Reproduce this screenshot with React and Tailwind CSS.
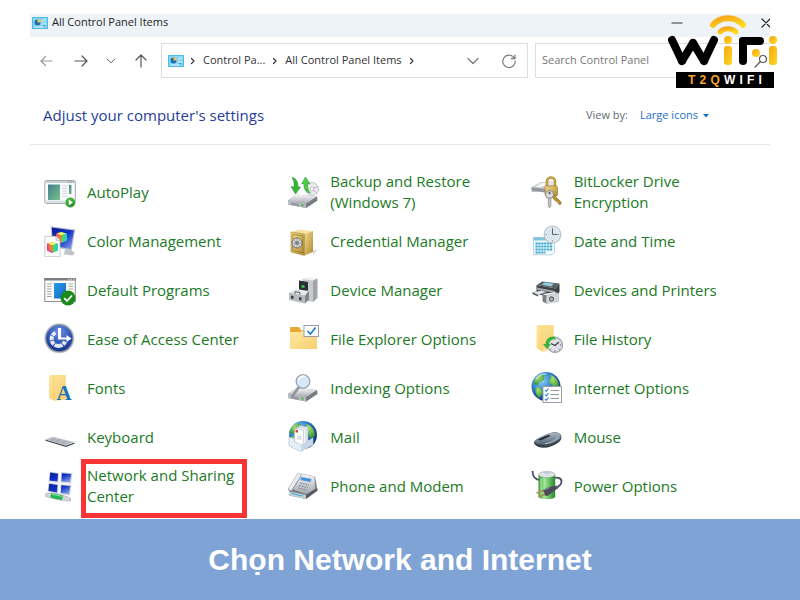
import React, { useState } from "react";

// shared gradients, referenced by every icon below
function IconDefs() {
  return (
    <svg width="0" height="0" className="absolute" aria-hidden="true">
      <defs>
        <linearGradient id="gSteel" x1="0" y1="0" x2="0" y2="1">
          <stop offset="0" stopColor="#f7f8f9" />
          <stop offset="1" stopColor="#a3a8ae" />
        </linearGradient>
        <linearGradient id="gDark" x1="0" y1="0" x2="0" y2="1">
          <stop offset="0" stopColor="#a9b8c8" />
          <stop offset="1" stopColor="#55616f" />
        </linearGradient>
        <linearGradient id="gPhoto" x1="0" y1="0" x2="1" y2="1">
          <stop offset="0" stopColor="#3f7f92" />
          <stop offset="1" stopColor="#7cc08a" />
        </linearGradient>
        <linearGradient id="gBlue" x1="0" y1="0" x2="1" y2="1">
          <stop offset="0" stopColor="#2b9be8" />
          <stop offset="1" stopColor="#1168c4" />
        </linearGradient>
        <linearGradient id="gScreen" x1="0" y1="0" x2="1" y2="1">
          <stop offset="0" stopColor="#0b1c9c" />
          <stop offset="0.5" stopColor="#1433c4" />
          <stop offset="1" stopColor="#8fb0ee" />
        </linearGradient>
        <linearGradient id="gFolder" x1="0" y1="0" x2="1" y2="1">
          <stop offset="0" stopColor="#ffe9a6" />
          <stop offset="1" stopColor="#f7cf6c" />
        </linearGradient>
        <linearGradient id="gGold" x1="0" y1="0" x2="1" y2="1">
          <stop offset="0" stopColor="#f3da8c" />
          <stop offset="1" stopColor="#b08a30" />
        </linearGradient>
        <linearGradient id="gGreen" x1="0" y1="0" x2="1" y2="0">
          <stop offset="0" stopColor="#2c9a2e" />
          <stop offset="0.35" stopColor="#a6e89a" />
          <stop offset="1" stopColor="#1f8a26" />
        </linearGradient>
        <linearGradient id="gRainbow" x1="0" y1="0" x2="1" y2="0">
          <stop offset="0" stopColor="#f0308c" />
          <stop offset="0.3" stopColor="#ffd02a" />
          <stop offset="0.6" stopColor="#46e04a" />
          <stop offset="1" stopColor="#2ac6f4" />
        </linearGradient>
        <linearGradient id="gLogo" x1="0" y1="0" x2="1" y2="1">
          <stop offset="0" stopColor="#f6a51c" />
          <stop offset="1" stopColor="#ffdb1a" />
        </linearGradient>
        <radialGradient id="gGlobe" cx="0.35" cy="0.3" r="0.75">
          <stop offset="0" stopColor="#8fd4fa" />
          <stop offset="0.5" stopColor="#2b7ccc" />
          <stop offset="1" stopColor="#0d2c70" />
        </radialGradient>
        <radialGradient id="gLand" cx="0.4" cy="0.3" r="0.8">
          <stop offset="0" stopColor="#a8e06c" />
          <stop offset="1" stopColor="#2b8a32" />
        </radialGradient>
        <radialGradient id="gEase" cx="0.5" cy="0.25" r="0.8">
          <stop offset="0" stopColor="#6f93e0" />
          <stop offset="0.6" stopColor="#2b50b4" />
          <stop offset="1" stopColor="#14307e" />
        </radialGradient>
        <radialGradient id="gBadge" cx="0.4" cy="0.3" r="0.8">
          <stop offset="0" stopColor="#58c44a" />
          <stop offset="1" stopColor="#12801a" />
        </radialGradient>
      </defs>
    </svg>
  );
}

function Svg({ children, className = "size-8 shrink-0" }) {
  return (
    <svg viewBox="0 0 32 32" className={className} fill="none" aria-hidden="true">
      {children}
    </svg>
  );
}

function Cube({ x, y }) {
  return (
    <g transform={`translate(${x} ${y})`}>
      <path d="M0 2.500 5 1l6 1.500v7L5.500 12 0 9.500z" fill="url(#gRainbow)" />
      <path d="M0 2.500 5.500 4v8L0 9.500z" fill="#f33a55" opacity="0.55" />
      <path d="M1 2.600 5.500 1.200 10 2.600 5.500 4z" fill="#fff36b" />
      <path d="M1 8.500 5.500 10.500v1.500L1 10z" fill="#e936c8" />
    </g>
  );
}

function Land() {
  return (
    <g fill="url(#gLand)">
      <path d="M4 7c2-3 5-4.500 8-5l2 1.500-1.500 2 1 1.500-3 2.500-2.500.5-.5 2.500-3 .5-2-2z" />
      <path d="M4.500 15l4 .5 3.500 3-1 3.500-2.500 4c-3-2-4.500-6-4-11z" />
      <path d="M18.500 2.500c4 1 7.500 4 9 8l.5 4-2.500 3-3-1-1-3.500-3-1.500-.5-3.500 2-2z" />
    </g>
  );
}

function Drive() {
  return (
    <g>
      <path d="M1 22 9 16l21 2 .3 4L19 29.500 1 26z" fill="#8b9096" />
      <path d="M1 22 9 16l21 2-11 7.500z" fill="url(#gSteel)" />
      <path d="M1 22v4l18 3.500v-4z" fill="#b9bdc2" />
      <path d="M19 25.500v4L30.300 22 30 18z" fill="#777c82" />
      <path d="M4 24.500l8 1.500M4 25.800l8 1.500" stroke="#6c7178" strokeWidth="0.6" />
      <path d="M14.500 25.500l2 .4v2l-2-.4z" fill="#33bb33" />
    </g>
  );
}

function AutoPlayIcon() {
  return (
    <Svg>
      <rect x="0.8" y="4.500" width="30.500" height="23" rx="1.500" fill="#fafbfc" stroke="#a4abb5" />
      <path d="M1.300 5h29.500v2H1.300z" fill="#c9d0d9" />
      <path d="M24 6h1.500M26.500 6H28M29 6h1" stroke="#707a86" strokeWidth="0.8" />
      <path d="M1.300 24.500h29.500V27H1.300z" fill="#dde2e8" />
      <rect x="4" y="8.500" width="12" height="15.500" fill="url(#gPhoto)" />
      <path d="M18 10h5M18 12.500h5M18 15h5M18 17.500h5M18 20h5" stroke="#d3d8de" />
      <rect x="25" y="9" width="2.500" height="9" fill="url(#gPhoto)" />
      <circle cx="26.300" cy="26.500" r="5" fill="url(#gBadge)" stroke="#b7d9b3" strokeWidth="0.6" />
      <path d="M24.800 23.800v5.400l4.200-2.700z" fill="#fff" />
    </Svg>
  );
}

function ColorIcon() {
  return (
    <Svg>
      <path d="M21 24l6 1 4 3-2 2.500-9-1z" fill="#c2c5c9" />
      <path d="M6.700 1.300 31.300 4.500 27.700 25.500 8 22z" fill="#bcc4cf" />
      <path d="M7.800 2.600 30 5.500 26.800 24 9 20.800z" fill="url(#gScreen)" />
      <Cube x={12} y={6} />
      <path d="M.8 11.300H12l4 4v16.400H.8z" fill="#fdfdfd" stroke="#b5b8bc" strokeWidth="0.7" />
      <path d="M12 11.300v4h4" fill="#e3e5e8" stroke="#b5b8bc" strokeWidth="0.7" />
      <Cube x={3} y={16} />
    </Svg>
  );
}

function DefaultIcon() {
  return (
    <Svg>
      <rect x="0.8" y="4.500" width="30.500" height="23" fill="#fcfcfc" stroke="#8d9093" />
      <path d="M.3 4h31.400v2.500H.3z" fill="#7b7e82" />
      <path d="M24 5.200h1.500M26.500 5.200H28M29 5.200h1.500" stroke="#fff" strokeWidth="0.7" />
      <rect x="10" y="9" width="12" height="15.500" fill="url(#gBlue)" />
      <path
        d="M3 10h4.500M3 12.500h4.500M3 15h4.500M3 17.500h4.500M3 20h4.500M3 22.500h4.500M24.500 10H29M24.500 12.500H29M24.500 15H29"
        stroke="#9a9da1"
        strokeWidth="0.9"
      />
      <circle cx="24" cy="24" r="7.500" fill="#1b8a1b" />
      <path d="M20.200 24.200l2.800 2.800 5-5.500" stroke="#fff" strokeWidth="1.800" />
    </Svg>
  );
}

function EaseIcon() {
  return (
    <Svg>
      <circle cx="15.300" cy="15.300" r="15" fill="#c4c8cf" />
      <circle cx="15.300" cy="15.300" r="14" fill="#8c91a0" />
      <circle cx="15.300" cy="15.300" r="13" fill="url(#gEase)" />
      {/* three quarter ring, open towards the top right */}
      <path d="M14.500 23a7 7 0 0 0 6.500-4.500M14.500 23a7 7 0 0 1 -3-13.300" stroke="#e6ebf6" strokeWidth="4" strokeDasharray="4 0.800" />
      <path d="M14 5h3v9.500h5.500V12l5 3.500-5 3.500v-2.500H14z" fill="#fff" />
    </Svg>
  );
}

function FontsIcon() {
  return (
    <Svg>
      <path d="M7 3h14.500v24.500H9z" fill="#f3cd6b" />
      <path d="M5 3.500 11 5v24l-6-3z" fill="url(#gFolder)" />
      <path d="M11 5 7 3h14.500v24.500L11 29z" fill="url(#gFolder)" opacity="0.8" />
      <text x="12.500" y="28" fontFamily="Liberation Serif, serif" fontWeight="700" fontSize="21" fill="#1a73b0">
        A
      </text>
    </Svg>
  );
}

function KeyboardIcon() {
  return (
    <Svg>
      <path d="M1.500 18.500 22 24.500l8.500-3v1.200L22 26 1.500 19.800z" fill="#42464b" />
      <path d="M1.500 18.500 8.500 15.800l22 5.200L22 24.800z" fill="#c5c9ce" />
      <path
        d="M4.500 18.400l17.500 5.100M6.500 17.600l17.500 5M8.500 16.900l18.500 4.700M7 19.300l4.500-1.900M12 20.800l4.500-2M17 22.200l4.500-2"
        stroke="#9398a0"
        strokeWidth="0.5"
      />
    </Svg>
  );
}

function NetworkIcon() {
  return (
    <Svg>
      <path d="M5.500 1.500 15 3l-.7 10L4.500 11.500zM17 2l11.500 1-1.500 10.500-10.500-.7z" fill="#ccd3de" />
      <path d="M4.500 12.500 14.500 14 13.800 24 3.500 21.800zM16.500 14.200 27.500 15 26 25.500l-10-1.300z" fill="#ccd3de" />
      <path d="M6.300 2.600 14 3.800l-.5 7.800-8-1.200zM17.900 3.200l9.300.8-1.200 8-8.600-.7z" fill="url(#gScreen)" />
      <path d="M5.300 13.700 13.500 15 13 22.500l-8.500-1.700zM17.400 15.300l8.800.7L25 24l-8.200-1z" fill="url(#gScreen)" />
      <path d="M1.500 23.500c8-1.500 17 1.500 25 4.500v3c-9 0-17-2-25-4.500z" fill="#d3d7dc" stroke="#9ba1a8" strokeWidth="0.5" />
      <path d="M7 23.500c4 0 8 1 12 2.300l-1 4.200c-4-.3-8-1.500-11.500-2.500z" fill="#20b64b" />
      <path d="M8 24.600c3 0 6 .8 10 2" stroke="#86eba0" />
    </Svg>
  );
}

function BackupIcon() {
  return (
    <Svg>
      <circle cx="25" cy="13" r="6.500" fill="#e9ecee" stroke="#aeb3b8" strokeWidth="0.7" />
      <path d="M25 13l6-2.500M25 13l5 4" stroke="#cfa8e0" />
      <circle cx="25" cy="13" r="1.800" fill="#fff" stroke="#9ba0a6" strokeWidth="0.6" />
      <g transform="translate(0 2.500)">
        <Drive />
      </g>
      <path d="M5 1.500c4 .5 6 4 6 9.500h2.500l-5 7L4 10.500l3 .5c.5-4-.5-7-2-9.500z" fill="#39b436" stroke="#1f8a26" strokeWidth="0.5" />
      <path d="M18.500 1l4.500 7-2.500-.3c0 4 .5 7 3 9.500-5-1-7-4.500-6.500-9.700l-2.500.5z" fill="#4fca48" stroke="#1f8a26" strokeWidth="0.5" />
    </Svg>
  );
}

function SafeIcon() {
  return (
    <Svg>
      <path d="M26 26l5-2-5 6z" fill="#d6d6d6" />
      <path d="M4 7 12 4.500l14 1.500L17.500 9z" fill="#f6e4a4" />
      <path d="M17.500 9 26 6v21l-8.500 3.500z" fill="url(#gGold)" />
      <path d="M4 7l13.500 2v21.500L4 27z" fill="url(#gGold)" stroke="#a98836" strokeWidth="0.6" />
      <path d="M5.800 9.300 15.800 11v17L5.800 25.300z" stroke="#8c6c20" strokeWidth="0.6" />
      <circle cx="10" cy="18" r="5" fill="#d7d8d9" stroke="#77736a" />
      <circle cx="10" cy="18" r="2" fill="#888a8c" />
      <path d="M10 13.500v9M5.500 18h9M7 15l6 6M13 15l-6 6" stroke="#77787a" strokeWidth="0.5" />
    </Svg>
  );
}

function DeviceManagerIcon() {
  return (
    <Svg>
      <path d="M15.500 5 20 3l10.500 1.500L26 6.500z" fill="#f1f2f3" />
      <path d="M15.500 5 26 6.500V28l-10.500-2z" fill="#c8cacd" />
      <path d="M26 6.500l4.500-2V24L26 28z" fill="#a0a4a8" />
      <path d="M12 6.500l9 1.500v11L12 17.500z" fill="#2a2d30" />
      <path d="M14.500 11l3 .5v2.500l-3-.5z" fill="#3bd047" />
      <path d="M2 18.500 9 15l13 2-4 4.500z" fill="#e6e8ea" />
      <path d="M2 18.500 18 21.500v8L2 26z" fill="#b9bcc1" />
      <path d="M18 21.500l4-4.500v8.500l-4 4z" fill="#80858b" />
      <path d="M4 21.500l2.500.5v3L4 24.500zM12 23l2.500.5v3L12 26z" fill="#3b3f43" />
      <path d="M8 19.700v-2l5 .8v2" stroke="#55595e" />
    </Svg>
  );
}

function FolderOptionsIcon() {
  return (
    <Svg>
      <path d="M3 5c0-.7.500-1 1-1h8l2 3h15c.7 0 1 .4 1 1v5H3z" fill="#e9a733" />
      <path d="M3 9h10l2-1.500h15V25c0 .6-.4 1-1 1H4c-.6 0-1-.4-1-1z" fill="url(#gFolder)" />
      <rect x="17" y="2.500" width="14.500" height="11" fill="#fff" stroke="#9a9da1" />
      <path d="M20.500 8l3 3 5-6.500" stroke="#1c7bd4" strokeWidth="1.600" />
    </Svg>
  );
}

function IndexingIcon() {
  return (
    <Svg>
      <Drive />
      <path d="M5.500 24 12 15" stroke="#8b929b" strokeWidth="2.500" strokeLinecap="round" />
      <circle cx="16" cy="9.500" r="6.800" fill="#cfe3f7" fillOpacity="0.85" stroke="#9aa6b5" strokeWidth="1.300" />
      <path d="M11.500 8c1-2.500 3.500-4 6-3.500" stroke="#fff" strokeWidth="1.500" strokeLinecap="round" />
    </Svg>
  );
}

function MailIcon() {
  return (
    <Svg>
      <circle cx="16" cy="14" r="14" fill="url(#gGlobe)" />
      <Land />
      <path d="M12 4.500l9 1.500v16l-9-1z" fill="#e8eef6" stroke="#9fb0c4" strokeWidth="0.5" />
      <path d="M10 6l9 1.500v17l-9-2z" fill="#f3f6fa" stroke="#9fb0c4" strokeWidth="0.5" />
      <path d="M7.500 7.500l9 1.500v17l-9-2z" fill="#fff" stroke="#9fb0c4" strokeWidth="0.5" />
      <path d="M8.500 8.800l2.500.5v2.500l-2.500-.5z" fill="#e03a3a" />
      <path d="M10 15.500l4.500.7M10 17.500l4.500.7" stroke="#a4b2c2" strokeWidth="0.7" />
      <path d="M2 16l5.500 1.500v3L14 24l12-7v6.500L14 30.500 2 25z" fill="#e6eef8" stroke="#a8b8cc" strokeWidth="0.6" />
      <path d="M14 24v6.500l12-7V17z" fill="#c9d7e9" />
    </Svg>
  );
}

function PhoneIcon() {
  return (
    <Svg>
      <path d="M2 22 14 3.500l14 3 2.500 14L19 29 2 25.500z" fill="#7c838b" />
      <path d="M5 19 14.500 4 27.500 6.500 28 19l-8 5z" fill="url(#gSteel)" />
      <path d="M14.500 7l10 2-1 3-10-2z" fill="#3f93dc" />
      <path d="M2 21.500 19 25v4L2 25.500z" fill="#c4cdd4" />
      <path d="M4 23.500l12 2.500" stroke="#46b3d4" strokeWidth="1.200" />
      <path d="M19 25l11-7 .5 2.500L19 29z" fill="#555b63" />
      <path d="M13 13l9 2M12 15.500l9 2M11 18l9 2" stroke="#858b93" strokeDasharray="1.800 1" strokeWidth="1.200" />
      <path d="M3.500 19 12 5.500" stroke="#8a9198" strokeWidth="4.800" strokeLinecap="round" />
      <path d="M3.500 18.500 12 5" stroke="#e9ecef" strokeWidth="3.500" strokeLinecap="round" />
    </Svg>
  );
}

function BitLockerIcon() {
  return (
    <Svg>
      <path d="M.7 11.500 10 6.500l14-.5-2 9-21 .5z" fill="url(#gSteel)" stroke="#9da1a6" strokeWidth="0.5" />
      <path d="M.7 11.500l13 1.500 8-1v3l-6 2-15-3z" fill="#93979d" />
      <path d="M4 10.800l8-3.300h4l-6 4z" fill="#fff" opacity="0.8" />
      <path d="M16 11V5.500a4 4 0 0 1 8 0V11" stroke="#a37a1f" strokeWidth="2.400" />
      <path d="M16 11V5.500a4 4 0 0 1 8 0V11" stroke="#e0bd5c" strokeWidth="1" />
      <rect x="14" y="10" width="12.500" height="10" rx="1.500" fill="url(#gGold)" stroke="#94701f" strokeWidth="0.6" />
      <path d="M22 18l8.500 8.500-1 2-2-.3-.5-2.200-2-.5L20 20z" fill="#b8902f" stroke="#7c5c14" strokeWidth="0.5" />
      <circle cx="18.500" cy="18.500" r="4" fill="#dadcde" stroke="#777b80" strokeWidth="0.8" />
      <circle cx="18.500" cy="17" r="1.200" fill="#62666b" />
      <path d="M17.300 22h2.600v8l-1.300 1.800-1.300-1.500z" fill="#c3c6c9" stroke="#74787c" strokeWidth="0.6" />
    </Svg>
  );
}

function DateIcon() {
  return (
    <Svg>
      <path d="M2.500 12.500h21v15L20 30l-17.500-.5z" fill="#f2fafc" stroke="#9dc3d0" strokeWidth="0.7" />
      <path d="M2.500 12.500h21v3h-21z" fill="#7fc6dd" />
      <path d="M4.500 18.500h17M4.500 21.500h17M4.500 24.500h17M4.500 27.500h10" stroke="#35a6cd" strokeWidth="2" strokeDasharray="2.200 0.700" />
      <circle cx="21.500" cy="9.500" r="8.300" fill="#eaf0f4" stroke="#b9c3cb" strokeWidth="1.300" />
      <circle cx="21.500" cy="9.500" r="6.300" fill="#dbe5ec" />
      <path d="M21.500 4v5.500h5" stroke="#56626c" />
      <path d="M21.500 2.800v1M21.500 15.300v1M14.800 9.500h1M27.300 9.500h1" stroke="#46525c" strokeWidth="0.8" />
    </Svg>
  );
}

function PrinterIcon() {
  return (
    <Svg>
      <path d="M6 11 11 7.500l17.500 2-4 5z" fill="#5d6165" />
      <path d="M10.500 10.500 14 8.500l9 1.300-3 2.700z" fill="#8fd0e4" />
      <path d="M5.500 11l19 3.500 4-5V18l-4.500 6L5.500 20z" fill="#3c4043" />
      <path d="M6 13.500l18 3.500v2L6 15.800z" fill="#a2a6aa" />
      <path d="M1.500 18.500l9-2 5 1.500-8.500 3z" fill="#e4e6e8" stroke="#85898e" strokeWidth="0.5" />
      <path d="M1.500 18.500l5.500 2.500v1.500l-5.500-2.500z" fill="#4e5256" />
      <path d="M11.500 20l4 1.500v8l-4-2z" fill="#7b7f84" />
      <path d="M15.500 21.500 27.500 19v8.500L15.500 29.500z" fill="#d3d5d8" stroke="#94989c" strokeWidth="0.4" />
      <path d="M11.500 20l12-1.800 4 .8-12 2.500z" fill="#eff0f1" />
      <circle cx="20.500" cy="25" r="3.300" fill="#62676c" stroke="#f2f3f4" strokeWidth="0.9" />
      <circle cx="20.500" cy="25" r="1.500" fill="#a3b9ca" />
    </Svg>
  );
}

function HistoryIcon() {
  return (
    <Svg>
      <path d="M7 2h15.500v23.500H9z" fill="#f5d57e" />
      <path d="M5.500 2.500 12 5v24l-6.500-4z" fill="url(#gFolder)" />
      <path d="M12 5 7 2h15.500v23.500L12 29z" fill="url(#gFolder)" opacity="0.7" />
      <circle cx="24" cy="22" r="7.500" fill="#dfe2e5" stroke="#a6abb0" strokeWidth="1.300" />
      <path d="M20 20.500l4 2 4-3.500" stroke="#373c42" strokeWidth="1.100" />
      <path d="M24 15.500v1.200M24 27.300v1.200M30.300 22H29M19 26.500l.8-.8M28.500 26.500l-.8-.8" stroke="#5c6268" />
      <path d="M24 13.500c-6-.5-9 2.500-9.500 7.500H12l4 5 4-5h-2c.5-3 2.500-4.500 6-5z" fill="#39b23c" />
    </Svg>
  );
}

function InternetIcon() {
  return (
    <Svg>
      <circle cx="15" cy="14.500" r="14.500" fill="url(#gGlobe)" />
      <Land />
      <path d="M5 7c2-3 6-5 10-5" stroke="#d7f0ff" strokeWidth="1.500" strokeLinecap="round" opacity="0.6" />
      <rect x="12" y="14.500" width="18.500" height="16" fill="#fff" stroke="#9a9da2" />
      <path d="M14 18l1.200 1.300 2.300-2.800M14 22.500l1.200 1.300 2.300-2.800M14 27l1.200 1.300 2.300-2.800" stroke="#2a7ed0" strokeWidth="1.100" />
      <path d="M19.500 18.500H28M19.500 22.500H28M19.500 26.500H28" stroke="#93979c" />
    </Svg>
  );
}

function MouseIcon() {
  return (
    <Svg>
      <path d="M3 21.500c0-2 5-4.500 10-7 5-2.300 11-4.500 15-2.300 3.500 2 3 6 0 8.800-5 4-11 6-16 5.800-5-.3-9-2.800-9-5.300z" fill="#39414b" />
      <path d="M3.300 20.500c1-2 5-4 10-6 5-2.300 11-4 14.700-2 3 2 2 5-1.500 7-4.500 3-9.500 4.700-14 4.500-4.500-.2-8.200-1.500-9.200-3.500z" fill="url(#gDark)" />
      <path d="M7 18.500c4-2 7-3.200 10.500-4.500l2 .8c-3 1.700-6 3-10 4.700z" fill="#20262d" />
      <path d="M14 22.800c5-.5 10-3 13.500-6.500" stroke="#c7d3df" strokeWidth="0.8" />
    </Svg>
  );
}

function PowerIcon() {
  return (
    <Svg>
      <path d="M20 9c6-3 11-1 10.500 3-.5 4.500-4 3.500-5 7" stroke="#4c4a6a" strokeWidth="1.800" />
      <path d="M1.500 1c0 6 3 9 8 9" stroke="#4c4a6a" strokeWidth="1.800" />
      <path d="M7.500 4.500h16.700V27c-2 3-14.500 3-16.700 0z" fill="url(#gGreen)" />
      <ellipse cx="15.900" cy="4.500" rx="8.300" ry="3" fill="#dfe3e6" stroke="#9aa0a5" strokeWidth="0.6" />
      <ellipse cx="15.900" cy="2.300" rx="3.300" ry="1.600" fill="#b7cbe0" />
      <path d="M10 9v16" stroke="#d9fbd2" opacity="0.7" />
      <path d="M5.500 23l7-2.500M7.500 27l7-3" stroke="#b98a4c" strokeWidth="1.800" />
      <path d="M12 20l6-3 8-1.500-1 4-7.500 6-3 .5z" fill="#4b4b58" />
      <path d="M13 20l6-2.500" stroke="#9191a0" />
    </Svg>
  );
}

function PanelIcon() {
  return (
    <svg viewBox="0 0 16 12" className="h-3 w-4 shrink-0" fill="none" aria-hidden="true">
      <rect width="16" height="12" rx="0.6" fill="#4db9ea" />
      <rect x="1" y="1" width="14" height="10" fill="#8ad6f6" />
      <circle cx="5.500" cy="5.500" r="3" fill="#1b6fae" />
      <path d="M5.500 5.500V2a3.500 3.500 0 0 1 3.500 3.500z" fill="#f3c55c" />
      <path d="M10.500 4.500l3-2M10.500 7h3.500M3 10h9" stroke="#eefaff" strokeWidth="0.8" />
      <path d="M11 8.800h2.500" stroke="#1b6fae" strokeWidth="0.8" />
    </svg>
  );
}

function Stroke({ d, className }) {
  return (
    <svg viewBox="0 0 16 16" className={className} fill="none" stroke="currentColor" strokeWidth="1.200" strokeLinecap="round" strokeLinejoin="round" aria-hidden="true">
      <path d={d} />
    </svg>
  );
}

const CHEVRON_RIGHT = "M6.500 5.500l2.500 2.500-2.500 2.500";
const CHEVRON_DOWN = "M3 5.500l5 5 5-5";

const ITEMS = [
  { name: "AutoPlay", icon: AutoPlayIcon },
  { name: "Backup and Restore (Windows 7)", icon: BackupIcon },
  { name: "BitLocker Drive Encryption", icon: BitLockerIcon },
  { name: "Color Management", icon: ColorIcon },
  { name: "Credential Manager", icon: SafeIcon },
  { name: "Date and Time", icon: DateIcon },
  { name: "Default Programs", icon: DefaultIcon },
  { name: "Device Manager", icon: DeviceManagerIcon },
  { name: "Devices and Printers", icon: PrinterIcon },
  { name: "Ease of Access Center", icon: EaseIcon },
  { name: "File Explorer Options", icon: FolderOptionsIcon },
  { name: "File History", icon: HistoryIcon },
  { name: "Fonts", icon: FontsIcon },
  { name: "Indexing Options", icon: IndexingIcon },
  { name: "Internet Options", icon: InternetIcon },
  { name: "Keyboard", icon: KeyboardIcon },
  { name: "Mail", icon: MailIcon },
  { name: "Mouse", icon: MouseIcon },
  { name: "Network and Sharing Center", icon: NetworkIcon, highlight: true },
  { name: "Phone and Modem", icon: PhoneIcon },
  { name: "Power Options", icon: PowerIcon },
];

function PanelItem({ item }) {
  const Icon = item.icon;
  return (
    <a href="#" className="flex h-12 items-center gap-[11px] text-[#1b7a25]">
      <Icon />
      <span className="relative max-w-[156px] text-[15px] leading-[21px]">
        {item.name}
        {item.highlight && <span className="absolute -top-[6px] -right-1 -bottom-[11px] -left-[6px] border-5 border-[#f83434]" />}
      </span>
    </a>
  );
}

function Logo() {
  return (
    <div className="absolute top-3 right-[22px] w-[110px]">
      <svg viewBox="0 0 110 60" className="block w-full" fill="none" role="img" aria-label="WiFi">
        <path d="M45 13C52 4 68 4 75 13" stroke="url(#gLogo)" strokeWidth="6" strokeLinecap="round" />
        <path d="M52 20C56 15.500 64 15.500 68 20" stroke="url(#gLogo)" strokeWidth="5" strokeLinecap="round" />
        <g stroke="#000" strokeWidth="8" strokeLinecap="round">
          <line x1="4" y1="28" x2="14" y2="49" />
          <line x1="14" y1="49" x2="25" y2="31" />
          <line x1="25" y1="31" x2="36" y2="49" />
          <line x1="36" y1="49" x2="46" y2="28" />
          <line x1="75" y1="49" x2="75" y2="29" />
          <line x1="75" y1="29" x2="92" y2="29" />
        </g>
        <circle cx="60" cy="28" r="4" fill="url(#gLogo)" />
        <rect x="56" y="34" width="8" height="19" rx="3" fill="url(#gLogo)" />
        <circle cx="88" cy="41" r="4" fill="url(#gLogo)" />
        <circle cx="105" cy="28" r="4" fill="url(#gLogo)" />
        <rect x="101" y="34" width="8" height="19" rx="3" fill="url(#gLogo)" />
      </svg>
      <div className="mr-1 ml-2 flex h-4 items-center justify-between bg-black px-3 font-['Liberation_Sans',sans-serif] text-[12px] font-bold text-white">
        <span className="text-[#f7a823]">T</span>
        <span className="text-[#f7a823]">2</span>
        <span className="text-[#f7a823]">Q</span>
        <span>W</span>
        <span>I</span>
        <span>F</span>
        <span>I</span>
      </div>
    </div>
  );
}

export default function App() {
  const [query, setQuery] = useState("");

  return (
    <div className="relative flex min-h-screen flex-col bg-white font-['Open_Sans','Noto_Sans',sans-serif]">
      <IconDefs />

      <div className="mx-[30px] pt-[14px]">
        {/* Title bar */}
        <div className="flex h-[23px] items-center bg-[#eef3f8] pb-[6px] pl-[2px] text-[11px] text-[#1d1d1d]">
          <PanelIcon />
          <span className="ml-1">All Control Panel Items</span>
          <button aria-label="Minimize" className="ml-auto text-[#333]">
            <Stroke d="M3 8h10" className="size-4" />
          </button>
          <button aria-label="Close" className="ml-[73px] w-3 overflow-hidden text-[#222]">
            <Stroke d="M4 4l8 8M12 4l-8 8" className="size-4" />
          </button>
        </div>

        {/* Navigation */}
        <div className="mt-[6px] flex h-[35px] items-center text-[11px] text-[#333]">
          <div className="flex items-center pl-[8px]">
            <button aria-label="Back" className="text-[#999]">
              <Stroke d="M14 8H3M7.500 3.500L3 8l4.500 4.500" className="size-4" />
            </button>
            <button aria-label="Forward" className="ml-[19px] text-[#555]">
              <Stroke d="M2 8h12M9 3l5 5-5 5" className="size-4" />
            </button>
            <button aria-label="Recent locations" className="ml-4 text-[#555]">
              <Stroke d={CHEVRON_DOWN} className="size-3" />
            </button>
            <button aria-label="Up" className="ml-4 text-[#555]">
              <Stroke d="M8 14V2M3 7l5-5 5 5" className="size-4" />
            </button>
          </div>
          <div className="ml-3 flex h-full flex-1 items-center border border-[#dedede] pr-[10px] pl-[6px]">
            <PanelIcon />
            <Stroke d={CHEVRON_RIGHT} className="ml-px size-4" />
            <button className="ml-[2px]">Control Pa...</button>
            <Stroke d={CHEVRON_RIGHT} className="ml-[2px] size-4" />
            <button className="ml-[2px]">All Control Panel Items</button>
            <Stroke d={CHEVRON_RIGHT} className="ml-[2px] size-4" />
            <button aria-label="Previous locations" className="ml-auto text-[#777]">
              <Stroke d={CHEVRON_DOWN} className="size-4" />
            </button>
            <button aria-label="Refresh" className="ml-5 text-[#777]">
              <Stroke d="M13.500 5.500A6.200 6.200 0 1 0 14.200 8M14 2v3.700h-3.700" className="size-4" />
            </button>
          </div>
          <div className="ml-[7px] flex h-full w-[235px] items-center border border-r-0 border-[#dedede] pr-px pl-[6px]">
            <input
              type="text"
              aria-label="Search Control Panel"
              placeholder="Search Control Panel"
              value={query}
              onChange={(e) => setQuery(e.target.value)}
              className="min-w-0 flex-1 outline-none placeholder:text-[#777]"
            />
            <Stroke d="M7 9l-5 5M6.500 6a3.500 3.500 0 1 0 7 0 3.500 3.500 0 1 0-7 0" className="size-4 text-[#555]" />
          </div>
        </div>

        {/* Heading */}
        <div className="flex h-[67px] items-center border-b border-[#e3e8ef] pt-[9px] pr-[61px] pl-[13px]">
          <h1 className="text-[15px] text-[#1f4099]">Adjust your computer's settings</h1>
          <label htmlFor="view-by" className="ml-auto text-[11px] text-[#5f6b7a]">
            View by:
          </label>
          <select id="view-by" className="ml-3 appearance-none text-[11px] text-[#1a6fc9]">
            <option>Large icons</option>
          </select>
          <svg viewBox="0 0 6 4" className="ml-1 h-1 w-[6px]" aria-hidden="true">
            <path d="M0 0h6L3 3.500z" fill="#1a6fc9" />
          </svg>
        </div>
      </div>

      {/* Items */}
      <div className="mt-[23px] mb-[9px] grid grid-cols-3 gap-y-px pr-[26px] pl-[44px]">
        {ITEMS.map((item) => (
          <PanelItem key={item.name} item={item} />
        ))}
      </div>

      <Logo />

      <div className="flex min-h-[81px] flex-1 items-center justify-center bg-[#7fa3d5]">
        <h2 className="font-['Liberation_Sans',sans-serif] text-[30px] font-bold text-white">Chọn Network and Internet</h2>
      </div>
    </div>
  );
}
